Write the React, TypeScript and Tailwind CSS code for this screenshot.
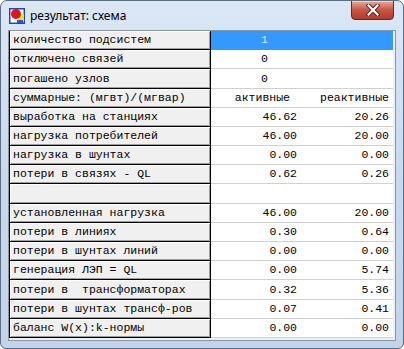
import React from "react";

const rows: { l: string; a: string; b: string; h: number; sel?: boolean; hdr?: boolean; c?: boolean }[] = [
  { l: "количество подсистем", a: "1", b: "", h: 19, sel: true, c: true },
  { l: "отключено связей", a: "0", b: "", h: 19, c: true },
  { l: "погашено узлов", a: "0", b: "", h: 20, c: true },
  { l: "суммарные: (мгвт)/(мгвар)", a: "активные", b: "реактивные", h: 19, hdr: true },
  { l: "выработка на станциях", a: "46.62", b: "20.26", h: 19 },
  { l: "нагрузка потребителей", a: "46.00", b: "20.00", h: 19 },
  { l: "нагрузка в шунтах", a: "0.00", b: "0.00", h: 19 },
  { l: "потери в связях - QL", a: "0.62", b: "0.26", h: 19 },
  { l: "", a: "", b: "", h: 20 },
  { l: "установленная нагрузка", a: "46.00", b: "20.00", h: 19 },
  { l: "потери в линиях", a: "0.30", b: "0.64", h: 19 },
  { l: "потери в шунтах линий", a: "0.00", b: "0.00", h: 19 },
  { l: "генерация ЛЭП = QL", a: "0.00", b: "5.74", h: 19 },
  { l: "потери в  трансформаторах", a: "0.32", b: "5.36", h: 20 },
  { l: "потери в шунтах трансф-ров", a: "0.07", b: "0.41", h: 19 },
  { l: "баланс W(x):k-нормы", a: "0.00", b: "0.00", h: 19 },
];

function AppIcon() {
  return (
    <svg width="16" height="16" viewBox="0 0 16 16">
      <rect x="0.5" y="0.5" width="15" height="15" fill="#ffffff" stroke="#1a2fa0" />
      <rect x="1" y="1" width="14" height="14" fill="none" stroke="#2f55d4" strokeWidth="1" />
      <path d="M9 6 L15 6 L15 13 L9 13 Z" fill="#f7e21a" />
      <circle cx="7" cy="6" r="5" fill="#e0151b" />
      <rect x="8" y="12" width="6" height="3" fill="#2f55d4" />
    </svg>
  );
}

export default function App() {
  const mono = { fontFamily: '"Liberation Mono", "Courier New", monospace' };
  return (
    <div className="w-[404px] h-[349px] bg-white">
      <div className="relative w-[404px] h-[349px] flex flex-col border border-[#5a6e87] rounded-t-[7px] rounded-b-[6px] bg-gradient-to-b from-[#dbe7f5] via-[#c8d9ed] to-[#c3d4ea] overflow-hidden">
        <div className="h-[29px] flex items-center pl-[8px] gap-[5px] shrink-0">
          <AppIcon />
          <span className="text-[12px] text-black leading-none pt-[1px]" style={{ fontFamily: '"Noto Sans", "Open Sans", sans-serif' }}>
            результат: схема
          </span>
        </div>
        <div className="absolute right-[9px] top-[-1px] w-[43px] h-[20px] rounded-b-[4px] border border-[#5a2b2b] bg-gradient-to-b from-[#e8a99b] via-[#c75545] to-[#b43a2b] flex items-center justify-center shadow-[inset_0_1px_0_rgba(255,255,255,0.5)]">
          <svg width="14" height="12" viewBox="0 0 14 12">
            <path d="M2.5 1.5 L11.5 10.5 M11.5 1.5 L2.5 10.5" stroke="#4a2020" strokeWidth="4" strokeLinecap="square" />
            <path d="M2.5 1.5 L11.5 10.5 M11.5 1.5 L2.5 10.5" stroke="#ffffff" strokeWidth="2.2" strokeLinecap="square" />
          </svg>
        </div>
        <div className="mx-[7px] mb-[7px] flex-1 border border-[#8797ab] bg-[#f0f0f0] flex flex-col">
          <div className="flex flex-col border-l border-black ml-0 mr-[2px]" style={mono}>
            {rows.map((r, i) => (
              <div key={i} className="flex" style={{ height: r.h }}>
                <div className="w-[201px] shrink-0 bg-[#f0f0f0] border-r border-b border-black shadow-[inset_1px_1px_0_#ffffff,inset_-1px_-1px_0_#a0a0a0] text-[11.5px] text-black flex items-center pl-[3px] whitespace-pre leading-none">
                  {r.l}
                </div>
                <div className={"flex flex-1 border-b text-[11.5px] leading-none whitespace-pre " + (r.sel ? "bg-[#3399ff] border-[#3399ff] text-[#d6ebff]" : "bg-white border-[#d0d0d0] text-black")}>
                  {r.c ? (
                    <div className="flex-1 flex items-center pl-[50px]">{r.a}</div>
                  ) : (
                    <>
                      <div className={"w-[89px] flex items-center justify-end " + (r.hdr ? "pr-[10px]" : "pr-[3px]")}>{r.a}</div>
                      <div className="flex-1 flex items-center justify-end pr-[4px]">{r.b}</div>
                    </>
                  )}
                </div>
              </div>
            ))}
          </div>
        </div>
      </div>
    </div>
  );
}
